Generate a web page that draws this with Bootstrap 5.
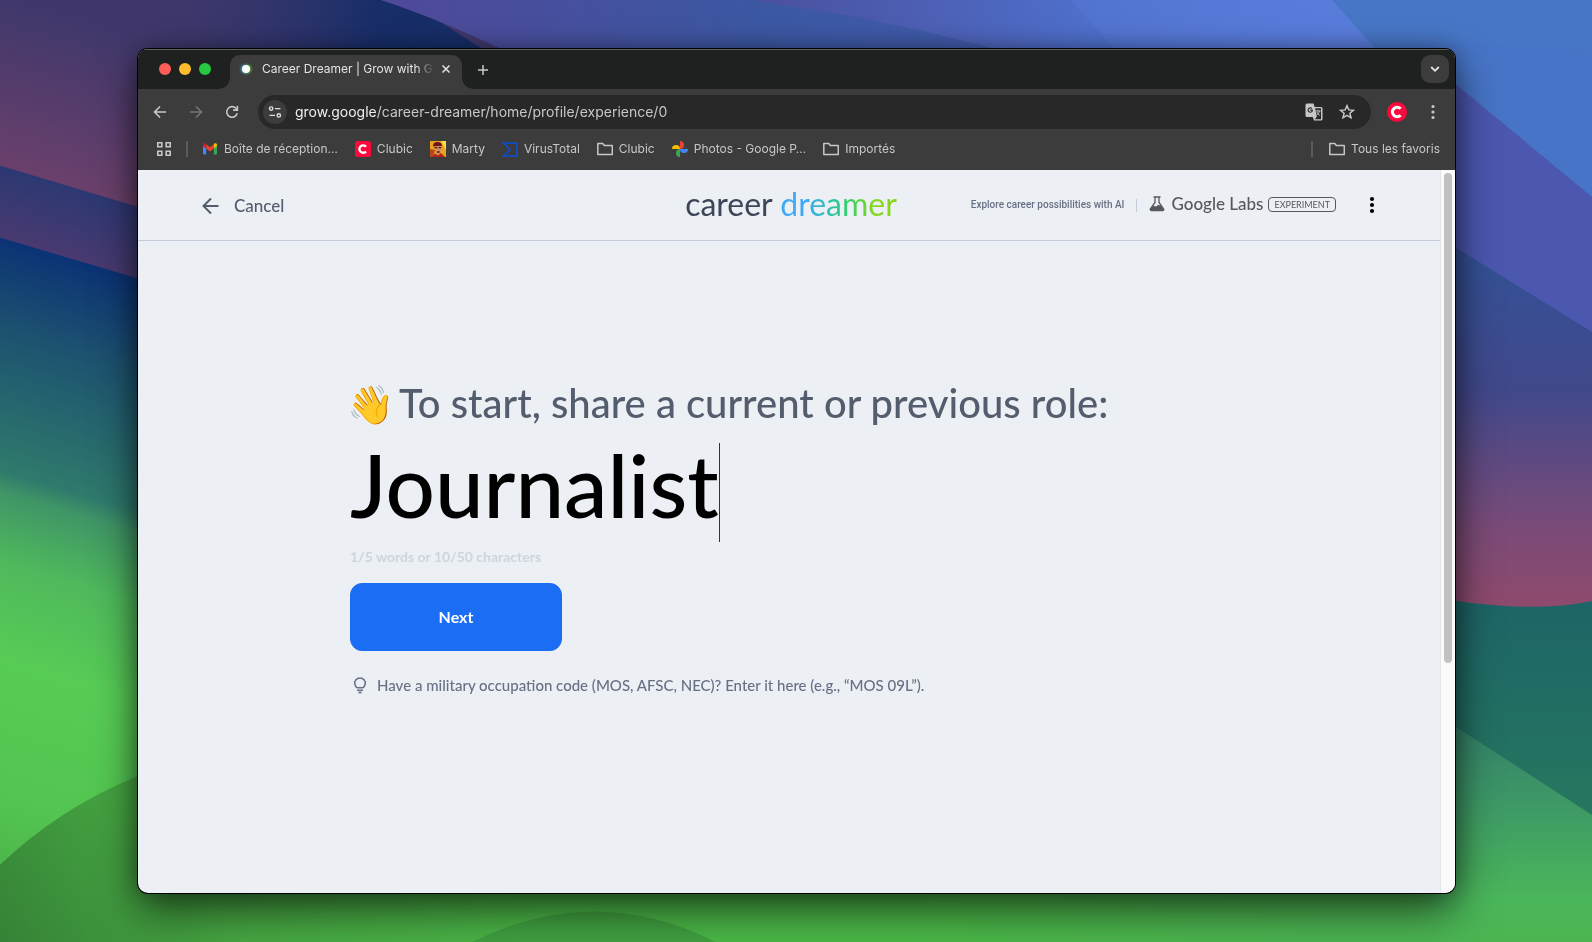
<!DOCTYPE html>
<html lang="fr">
<head>
<meta charset="utf-8">
<meta name="viewport" content="width=device-width, initial-scale=1">
<title>Career Dreamer | Grow with Google</title>
<link href="https://cdn.jsdelivr.net/npm/bootstrap@5.3.0/dist/css/bootstrap.min.css" rel="stylesheet">
<style>
  body { font-family: Lato, "Liberation Sans", sans-serif; background: #4fb952; }
  svg { display: block; flex: none; }
  .wallpaper { z-index: -1; }
  .desktop { padding: 49px 137px 49px 138px; }
  .browser { border-radius: 10px; background: #eceff4; box-shadow: 0 0 0 1px #000, 0 18px 44px rgba(0,0,0,.6), 0 0 24px rgba(0,0,0,.3); }

  .chrome { font-family: Inter, "Liberation Sans", sans-serif; font-size: 12px; line-height: 16px; color: #c7c7c7; background: #3c3c3c; }
  .chrome button { background: none; border: 0; padding: 0; color: #c7c7c7; display: flex; align-items: center; justify-content: center; }
  .chrome a { color: inherit; text-decoration: none; }
  .tabstrip { height: 40px; background: #1f2120; border-top: 1px solid #5f6160; padding: 0 6px 0 21px; }
  .lights { padding-bottom: 1px; }
  .lights i { width: 12px; height: 12px; border-radius: 50%; }
  .tab { width: 232px; height: 34px; margin-left: 19px; padding: 0 11px 6px 10px; border-radius: 10px 10px 0 0; background: #3c3c3c; color: #e3e3e3; }
  .tab::before, .tab::after { content: ""; position: absolute; bottom: 0; width: 10px; height: 10px; }
  .tab::before { left: -10px; background: radial-gradient(circle at 0 0, transparent 9px, #3c3c3c 10px); }
  .tab::after { right: -10px; background: radial-gradient(circle at 100% 0, transparent 9px, #3c3c3c 10px); }
  .tab-title { mask-image: linear-gradient(90deg, #000 154px, transparent 172px); -webkit-mask-image: linear-gradient(90deg, #000 154px, transparent 172px); }
  .favicon { width: 8px; height: 8px; border-radius: 50%; background: #fff; box-shadow: -1px 0 3px #3aa0e0, 1px 0 3px #6fc72c; margin: 0 12px 0 2px; }
  .chrome .tab-search { width: 28px; height: 28px; border-radius: 9px; background: #3c3c3c; color: #e3e3e3; margin-bottom: 1px; }
  .toolbar { height: 46px; padding: 0 14px 0 12px; }
  .omnibox { height: 34px; border-radius: 17px; background: #282828; padding: 0 16px 0 5px; margin-left: 16px; }
  .chrome .site-info { width: 24px; height: 24px; border-radius: 50%; background: #3c3c3c; }
  .url-text { font-size: 14px; color: #c7c7c7; }
  .url-text b { font-weight: 400; color: #eee; }
  .bookmarks { height: 35px; padding: 0 15px 7px 18px; gap: 17px; }
  .bookmarks a { display: flex; align-items: center; gap: 6px; }
  .bookmarks .vline { width: 2px; height: 16px; background: #5c5c5c; margin: 0 -3px; }
  .bookmarks .vline.ms-auto { margin-right: -1px; }

  .page-head { height: 71px; border-bottom: 1px solid #c5cbd8; padding: 0 56px 0 60px; }
  .cancel-link { font-size: 17px; font-weight: 500; color: #545d6d; vertical-align: middle; }
  .logo { font-size: 32px; line-height: 40px; padding-bottom: 3px; color: #3d4657; }
  .logo-tint { background: linear-gradient(90deg, #3fa9f5 22%, #2bc4a0 45%, #35d06a 58%, #86d71b 80%); -webkit-background-clip: text; background-clip: text; color: transparent; }
  .tagline { font-family: Roboto, "Liberation Sans", sans-serif; font-size: 10px; font-weight: 500; line-height: 16px; color: #677084; }
  .tagline-rule { width: 1px; height: 13px; background: #c5cbd8; margin: 0 12px; }
  .labs { font-size: 17px; line-height: 20px; color: #55585c; font-weight: 500; gap: 6px; padding-bottom: 2px; }
  .pill { font-size: 9px; line-height: 13px; border: 1px solid #55585c; border-radius: 4px; padding: 0 5px; margin: 0 0 2px 5px; color: #55585c; }
  .icon-btn { border: 0; background: none; padding: 0; width: 24px; height: 24px; color: #000; }
  .role-form { padding: 138px 24px 24px 212px; }
  .role-title { font-size: 40px; line-height: 48px; font-weight: 500; color: #545d6d; }
  .wave { width: 49px; font-size: 38px; margin-left: -3px; margin-right: 3px; }
  .role-input { width: 370px; height: 99px; margin-top: 16px; padding: 0 0 14px; border: 0; border-right: 1px solid #2d3440; background: none; outline: 0; font-size: 87px; font-weight: 500; color: #000; }
  .counter { margin-top: 5px; font-size: 14px; line-height: 20px; font-weight: 700; color: #ced4de; }
  .next-btn { width: 212px; height: 68px; margin-top: 16px; border-radius: 12px; font-size: 16px; font-weight: 700; --bs-btn-bg: #1b6ef3; --bs-btn-border-color: #1b6ef3; }
  .hint { margin-top: 22px; gap: 7px; line-height: 24px; font-size: 15px; font-weight: 500; color: #677084; }
  .scroll-track { width: 15px; background: #fafafa; border-left: 1px solid #e4e5e8; padding: 3px 3px 0; }
  .scroll-thumb { height: 68%; border-radius: 4px; background: #c1c1c1; }
</style>
</head>
<body class="vh-100 overflow-hidden">
<svg class="wallpaper position-fixed top-0 start-0 w-100 h-100" viewBox="0 0 1568 928" preserveAspectRatio="none" aria-hidden="true">
  <defs>
    <linearGradient id="plum" x1="0" y1="0" x2="-50" y2="190" gradientUnits="userSpaceOnUse"><stop offset="0" stop-color="#40386c"/><stop offset="1" stop-color="#74426b"/></linearGradient>
    <linearGradient id="navy" x1="0" y1="0" x2="1" y2="0"><stop offset="0" stop-color="#40386c" stop-opacity="0"/><stop offset=".6" stop-color="#182e69"/><stop offset="1" stop-color="#152c66"/></linearGradient>
    <linearGradient id="band" x1="0" y1="163" x2="-21" y2="234" gradientUnits="userSpaceOnUse"><stop offset="0" stop-color="#2c3873"/><stop offset="1" stop-color="#4c3a70"/></linearGradient>
    <linearGradient id="lft" x1="0" y1="235" x2="-190" y2="870" gradientUnits="userSpaceOnUse"><stop offset="0" stop-color="#0b3375"/><stop offset=".12" stop-color="#1c5070"/><stop offset=".33" stop-color="#2f7a6c"/><stop offset=".36" stop-color="#3f9566"/><stop offset=".46" stop-color="#4fb95c"/><stop offset=".6" stop-color="#57cc55"/><stop offset=".8" stop-color="#53c450"/><stop offset="1" stop-color="#45a843"/></linearGradient>
    <linearGradient id="top" x1="380" y1="0" x2="1400" y2="0" gradientUnits="userSpaceOnUse"><stop offset="0" stop-color="#50499a"/><stop offset=".35" stop-color="#3c57a2"/><stop offset="1" stop-color="#4763bd"/></linearGradient>
    <linearGradient id="top2" x1="740" y1="0" x2="1400" y2="0" gradientUnits="userSpaceOnUse"><stop offset="0" stop-color="#4b4f9d"/><stop offset=".5" stop-color="#4e6fcb"/><stop offset="1" stop-color="#5980de"/></linearGradient>
    <linearGradient id="glow" x1="1055" y1="0" x2="1400" y2="0" gradientUnits="userSpaceOnUse"><stop offset="0" stop-color="#5a7cdc" stop-opacity=".3"/><stop offset="1" stop-color="#5a7cdc" stop-opacity=".8"/></linearGradient>
    <linearGradient id="rose" x1="0" y1="270" x2="0" y2="600" gradientUnits="userSpaceOnUse"><stop offset="0" stop-color="#355094"/><stop offset=".35" stop-color="#41488b"/><stop offset=".75" stop-color="#794b78"/><stop offset="1" stop-color="#904a6d"/></linearGradient>
    <linearGradient id="teal" x1="0" y1="590" x2="0" y2="810" gradientUnits="userSpaceOnUse"><stop offset="0" stop-color="#1d6467"/><stop offset="1" stop-color="#26785f"/></linearGradient>
    <linearGradient id="grass" x1="0" y1="716" x2="0" y2="928" gradientUnits="userSpaceOnUse"><stop offset="0" stop-color="#348269"/><stop offset=".35" stop-color="#3d9866"/><stop offset=".8" stop-color="#4ab65a"/><stop offset="1" stop-color="#4cb552"/></linearGradient>
    <linearGradient id="hill" x1="0" y1="928" x2="500" y2="600" gradientUnits="userSpaceOnUse"><stop offset="0" stop-color="#358236"/><stop offset=".33" stop-color="#47a843"/><stop offset=".8" stop-color="#4cba48"/></linearGradient>
    <linearGradient id="meadow" x1="900" y1="0" x2="1300" y2="0" gradientUnits="userSpaceOnUse"><stop offset="0" stop-color="#4cb552" stop-opacity="0"/><stop offset="1" stop-color="#4cb552"/></linearGradient>
  </defs>
  <path d="M0 0H500V360L0 210Z" fill="url(#plum)"/>
  <path d="M110 0H400L540 90H110Z" fill="url(#navy)"/>
  <path d="M375 0H1568V300H700Q600 95 493 48Q430 18 375 0Z" fill="url(#top)"/>
  <path d="M740 0H1568V200H1300Q1110 84 980 48Q860 16 740 0Z" fill="url(#top2)"/>
  <path d="M1055 0H1320L1500 200H1230Z" fill="url(#glow)"/>
  <path d="M1312 0H1568V230L1380 76Z" fill="#4776c6"/>
  <path d="M1380 40L1568 50V200L1400 90Z" fill="#4771c6" opacity=".5"/>
  <path d="M1400 55L1568 194V340L1400 235Z" fill="#4c57b0"/>
  <path d="M0 163L260 241V330L0 250Z" fill="url(#band)"/>
  <path d="M0 234L300 323V928H0Z" fill="url(#lft)"/>
  <path d="M0 852Q60 795 135 765Q300 705 700 720H1500V928H0Z" fill="url(#hill)"/>
  <path d="M900 850H1500V928H900Z" fill="url(#meadow)"/>
  <path d="M465 928Q585 868 705 928Z" fill="#3f9c40" opacity=".8"/>
  <path d="M1400 223L1568 327V600H1400Z" fill="url(#rose)"/>
  <path d="M1400 586Q1500 606 1568 592V812H1400Z" fill="url(#teal)"/>
  <path d="M1400 694L1568 803V928H1400Z" fill="url(#grass)"/>
</svg>

<div class="desktop h-100">
<div class="browser h-100 d-flex flex-column overflow-hidden">
  <div class="chrome">
    <div class="tabstrip d-flex align-items-center">
      <div class="lights d-flex gap-2"><i style="background:#ff5f57"></i><i style="background:#febc2e"></i><i style="background:#28c840"></i></div>
      <div class="tab position-relative d-flex align-items-center align-self-end">
        <span class="favicon flex-shrink-0"></span>
        <span class="tab-title flex-fill text-nowrap overflow-hidden">Career Dreamer | Grow with G</span>
        <button aria-label="Fermer l’onglet"><svg width="10" height="10" viewBox="0 0 10 10" stroke="#e3e3e3" stroke-width="1.5"><path d="M1.500 1.500l7 7M8.500 1.500l-7 7"/></svg></button>
      </div>
      <button class="ms-3" aria-label="Nouvel onglet"><svg width="10" height="10" viewBox="0 0 10 10" stroke="currentColor" stroke-width="1.5"><path d="M5 0v10M0 5h10"/></svg></button>
      <button class="tab-search ms-auto" aria-label="Rechercher dans les onglets"><svg width="10" height="10" viewBox="0 0 10 10" fill="none" stroke="currentColor" stroke-width="1.8"><path d="M1.2 3l3.8 3.8L8.800 3"/></svg></button>
    </div>
    <div class="toolbar d-flex align-items-center">
      <button aria-label="Retour"><svg width="20" height="20" viewBox="0 0 20 20" fill="none" stroke="currentColor" stroke-width="1.6"><path d="M16 10H5M10 4.500L4.500 10l5.500 5.500"/></svg></button>
      <button class="ms-3" aria-label="Suivant"><svg width="20" height="20" viewBox="0 0 20 20" fill="none" stroke="#767676" stroke-width="1.6"><path d="M4 10h11M10 4.500l5.500 5.500-5.500 5.500"/></svg></button>
      <button class="ms-3" aria-label="Actualiser"><svg width="20" height="20" viewBox="0 0 20 20" fill="none" stroke="currentColor" stroke-width="1.6"><path d="M15.200 11.200A5.300 5.300 0 1 1 13.900 6.300L15.300 7.700"/><path d="M15.400 3.800v4.300h-4.300"/></svg></button>
      <div class="omnibox d-flex align-items-center flex-fill">
        <button class="site-info flex-shrink-0" aria-label="Informations sur le site"><svg width="14" height="14" viewBox="0 0 14 14" fill="none" stroke="#dedede" stroke-width="1.4"><circle cx="3.200" cy="3.600" r="1.700"/><path d="M7 3.600h5.500M1.500 10.400H7"/><circle cx="10.800" cy="10.400" r="1.700"/></svg></button>
        <a class="url-text ms-2 flex-fill text-nowrap" href="#"><b>grow.google</b>/career-dreamer/home/profile/experience/0</a>
        <button aria-label="Traduire cette page"><svg width="18" height="18" viewBox="0 0 18 18"><path d="M2 .5h6.500l1.200 3.500H16a1.500 1.500 0 0 1 1.500 1.500V16a1.500 1.500 0 0 1-1.500 1.500H9L7.800 14H2A1.500 1.500 0 0 1 .5 12.500V2A1.500 1.500 0 0 1 2 .5z" fill="#c7c7c7"/><path d="M10.200 5.300H16v10.900H9.800l2-2.400z" fill="#282828"/><path d="M7.600 7.100H5.200M6.900 5.500a2.200 2.200 0 1 0 .6 1.700" fill="none" stroke="#282828" stroke-width="1.100"/><path d="M10.600 8h5M13 6.800V8m1.500 0c-.4 1.800-1.500 3-3 4.100M11.800 9c.6 1.500 1.700 2.600 3 3.500" fill="none" stroke="#c7c7c7"/></svg></button>
        <button class="ms-3" aria-label="Ajouter aux favoris"><svg width="16" height="16" viewBox="0 0 16 16" fill="none" stroke="currentColor" stroke-width="1.500"><path d="M8 1.700l1.800 4.200 4.600.4-3.500 3 1.100 4.500L8 11.400l-4 2.400 1.100-4.500-3.500-3 4.600-.4z"/></svg></button>
      </div>
      <button class="ms-3" aria-label="Profil"><svg width="20" height="20" viewBox="0 0 20 20"><circle cx="10" cy="10" r="10" fill="#fa0a3c"/><path d="M13.600 6.800a4.700 4.700 0 1 0 0 6.400" fill="none" stroke="#fff" stroke-width="3"/></svg></button>
      <button class="ms-3" aria-label="Menu"><svg width="18" height="18" viewBox="0 0 18 18" fill="currentColor"><circle cx="10" cy="3.500" r="1.600"/><circle cx="10" cy="9" r="1.600"/><circle cx="10" cy="14.500" r="1.600"/></svg></button>
    </div>
    <nav class="bookmarks d-flex align-items-center text-nowrap" aria-label="Favoris">
      <button aria-label="Groupes d’onglets"><svg width="16" height="16" viewBox="0 0 16 16" fill="none" stroke="currentColor" stroke-width="1.600"><path d="M1.800 1.800h4v4h-4zM10.200 1.800h4v4h-4zM1.800 10.200h4v4h-4zM10.200 10.200h4v4h-4z"/></svg></button>
      <span class="vline"></span>
      <a href="#"><svg width="16" height="12" viewBox="-1 0 16 12"><path d="M0 2v8.600a1 1 0 0 0 1 1h2.200V4.600z" fill="#4285f4"/><path d="M14 2v8.600a1 1 0 0 1-1 1h-2.200V4.600z" fill="#34a853"/><path d="M10.800 1.400V5.500L14 3V1.700C14 .3 12.400-.3 11.400.6z" fill="#fbbc04"/><path d="M3.200 1.400V5.500L0 3V1.700C0 .3 1.600-.3 2.600.6z" fill="#c5221f"/><path d="M3.200 5.500V1.200L7 4.200l3.800-3v4.300L7 8.400z" fill="#ea4335"/></svg>Boîte de réception…</a>
      <a href="#"><svg width="16" height="16" viewBox="0 0 16 16"><rect width="16" height="16" rx="2.500" fill="#fa0a3c"/><path d="M11 5.700a3.700 3.700 0 1 0 0 4.700" fill="none" stroke="#fff" stroke-width="2.300"/></svg>Clubic</a>
      <a href="#"><svg width="16" height="16" viewBox="0 0 16 16"><path d="M0 0h16v16H0z" fill="#e9a21c"/><path d="M11 0h5v9z" fill="#f6e04a"/><path d="M0 8l5 1-2 7H0z" fill="#b8471a"/><path d="M3 5Q3 1 7.500 1T12 5l-2 .6H4z" fill="#6e1418"/><path d="M4.500 5h7v4L10 12.500 8 14 5.500 12z" fill="#d98d5f"/><path d="M4.500 6h2.800v1.200H4.500zM8.500 6h2.700v1.200H8.500zM7 10.200h2.600v1.500H7z" fill="#4a1b12"/><path d="M2 16l3-3.500 3 2 3-2.500 4 4z" fill="#b3201e"/></svg>Marty</a>
      <a href="#"><svg width="16" height="15" viewBox="0 0 16 15" fill="none" stroke="#0b4dda" stroke-width="1.500"><path d="M1.500 1H15v13H1.500L8 7.500z"/></svg>VirusTotal</a>
      <a href="#"><svg width="16" height="14" viewBox="0 0 16 14" fill="none" stroke="currentColor" stroke-width="1.500" stroke-linejoin="round"><path d="M.8 1.500h5l1.500 2h8v9H.8z"/></svg>Clubic</a>
      <a href="#"><svg width="16" height="16" viewBox="0 0 16 16"><path d="M8 0a4 4 0 0 1 0 8z" fill="#ea4335"/><path d="M16 8a4 4 0 0 1-8 0z" fill="#4285f4"/><path d="M8 16a4 4 0 0 1 0-8z" fill="#34a853"/><path d="M0 8a4 4 0 0 1 8 0z" fill="#fbbc04"/></svg>Photos - Google P…</a>
      <a href="#"><svg width="16" height="14" viewBox="0 0 16 14" fill="none" stroke="currentColor" stroke-width="1.500" stroke-linejoin="round"><path d="M.8 1.500h5l1.500 2h8v9H.8z"/></svg>Importés</a>
      <span class="vline ms-auto"></span>
      <a href="#"><svg width="16" height="14" viewBox="0 0 16 14" fill="none" stroke="currentColor" stroke-width="1.500" stroke-linejoin="round"><path d="M.8 1.500h5l1.500 2h8v9H.8z"/></svg>Tous les favoris</a>
    </nav>
  </div>

  <div class="d-flex flex-fill">
    <div class="flex-fill">
      <header class="page-head d-flex align-items-center">
        <div class="w-50 flex-shrink-1">
          <a href="#" class="cancel-link d-inline-flex align-items-center text-decoration-none"><svg class="me-2" width="28" height="24" viewBox="0 0 28 24" fill="none" stroke="currentColor" stroke-width="2"><path d="M20.500 12H5.500M13 4.500L5.500 12l7.500 7.500"/></svg>Cancel</a>
        </div>
        <div class="logo text-nowrap">career <span class="logo-tint">dreamer</span></div>
        <div class="w-50 flex-shrink-1 d-flex align-items-center justify-content-end text-nowrap">
          <span class="tagline">Explore career possibilities with AI</span>
          <span class="tagline-rule"></span>
          <span class="labs d-flex align-items-center"><svg width="16" height="16" viewBox="0 0 16 16"><path d="M4.500 1h7M6 1v5.500L1.300 13a1 1 0 0 0 .9 1.500h11.600a1 1 0 0 0 .9-1.500L10 6.500V1" fill="none" stroke="currentColor" stroke-width="1.300"/><path d="M3.500 9.800l3.500.7 2-1.500 3 .5 3 4.500-1 .8H2l-1-1z" fill="currentColor"/></svg>Google Labs</span>
          <span class="pill">EXPERIMENT</span>
          <button class="icon-btn ms-4" aria-label="More options"><svg width="24" height="24" viewBox="0 0 24 24"><circle cx="12" cy="6" r="2.100"/><circle cx="12" cy="12" r="2.100"/><circle cx="12" cy="18" r="2.100"/></svg></button>
        </div>
      </header>
      <main class="role-form d-flex flex-column align-items-start">
        <label for="role" class="role-title d-flex"><span class="wave">👋</span>To start, share a current or previous role:</label>
        <input id="role" class="role-input" type="text" value="Journalist" autocomplete="off" spellcheck="false">
        <div class="counter">1/5 words or 10/50 characters</div>
        <button class="btn btn-primary next-btn">Next</button>
        <div class="hint d-flex align-items-center"><svg width="20" height="20" viewBox="0 0 20 20" fill="none" stroke="currentColor" stroke-width="1.500"><path d="M7.300 12.800A5.300 5.300 0 1 1 12.700 12.800zM7 15.300h6"/><path d="M8.500 17.500h3" stroke-width="1.800"/></svg>Have a military occupation code (MOS, AFSC, NEC)? Enter it here (e.g., “MOS 09L”).</div>
      </main>
    </div>
    <div class="scroll-track"><div class="scroll-thumb"></div></div>
  </div>
</div>
</div>
<script src="https://cdn.jsdelivr.net/npm/bootstrap@5.3.0/dist/js/bootstrap.bundle.min.js"></script>
</body>
</html>
